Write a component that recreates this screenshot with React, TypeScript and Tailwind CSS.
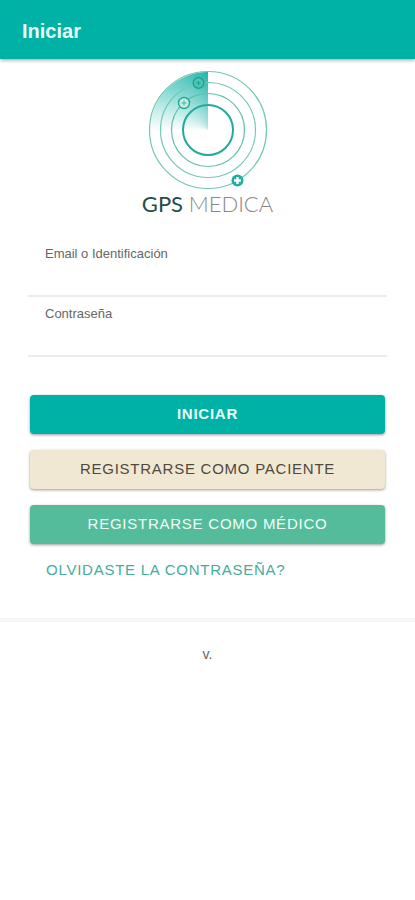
import React, { useState } from "react";

const Logo: React.FC = () => (
  <div className="flex flex-col items-center">
    <div className="relative w-[120px] h-[120px]">
      {/* Radar sweep */}
      <div className="absolute top-[2px] left-[2px] w-[58px] h-[58px] rounded-tl-full bg-[radial-gradient(circle_at_100%_100%,#ffffffaa_0%,#ffffff00_70%),conic-gradient(from_270deg_at_100%_100%,#00b1a505_0deg,#00b1a544_25deg,#00b1a588_50deg,#00a99ddd_90deg)]" />
      <svg className="absolute inset-0" width="120" height="120" viewBox="0 0 120 120" fill="none" aria-hidden="true">
        <circle cx="60" cy="60" r="58.5" stroke="#72c8b2" strokeWidth="1.2" />
        <circle cx="60" cy="60" r="47.5" stroke="#72c8b2" strokeWidth="1.2" />
        <circle cx="60" cy="60" r="36.5" stroke="#5fc0a8" strokeWidth="1.2" />
        <circle cx="60" cy="60" r="25" stroke="#22aa9b" strokeWidth="2" />
        <circle cx="50.5" cy="13" r="5.3" fill="#4fc4b4" stroke="#1b9f8f" strokeWidth="1.3" />
        <path d="M48.5 13h4M50.5 11v4" stroke="#1b9f8f" />
        <circle cx="36" cy="33" r="5.5" fill="#c5ece5" stroke="#1fa896" strokeWidth="1.4" />
        <path d="M33.5 33h5M36 30.5v5" stroke="#3fb5a0" />
        <circle cx="89.5" cy="110.5" r="6" fill="#1fae9f" />
        <path d="M86 110.5h7M89.5 107v7" stroke="#fff" strokeWidth="2.4" />
      </svg>
    </div>
    <h1 className="font-['Lato'] text-[22px] leading-7 whitespace-nowrap">
      <span className="text-[#1f4f49]">GPS</span>{" "}
      <span className="font-light text-[#888]">MEDICA</span>
    </h1>
  </div>
);

interface FieldProps {
  id: string;
  label: string;
  type: string;
  value: string;
  onChange: (value: string) => void;
}

const Field: React.FC<FieldProps> = ({ id, label, type, value, onChange }) => (
  <div className="flex flex-col h-[60px] px-[17px] pt-[9px] border-b-2 border-[#ececec]">
    <label htmlFor={id} className="text-[13px] leading-4 text-[#666]">{label}</label>
    <input
      id={id}
      type={type}
      value={value}
      onChange={(e) => onChange(e.target.value)}
      className="w-full flex-1 bg-transparent text-base outline-none"
    />
  </div>
);

const buttonClass = "w-full h-[39px] rounded-[4px] text-[15px] tracking-wider shadow-[0_1px_3px_rgba(0,0,0,0.4)]";

const App: React.FC = () => {
  const [email, setEmail] = useState("");
  const [password, setPassword] = useState("");

  return (
    <div className="min-h-screen bg-white font-['Liberation_Sans',sans-serif]">
      <header className="h-[59px] px-[22px] pt-[2px] flex items-center bg-[#00b1a5] shadow-[0_1px_4px_rgba(0,0,0,0.4)]">
        <p className="text-[20px] font-bold text-[#e8fbf8]">Iniciar</p>
      </header>

      <main>
        <form onSubmit={(e) => e.preventDefault()} className="px-7 pt-[11px] pb-9 border-b-4 border-[#f6f6f6]">
          <Logo />

          <div className="mt-[19px]">
            <Field id="email" label="Email o Identificación" type="text" value={email} onChange={setEmail} />
            <Field id="password" label="Contraseña" type="password" value={password} onChange={setPassword} />
          </div>

          <div className="mt-[38px] px-[2px] flex flex-col gap-4">
            <button type="submit" className={`${buttonClass} bg-[#00b1a5] text-[#eafffb] font-bold`}>INICIAR</button>
            <button type="button" className={`${buttonClass} bg-[#f1e8d3] text-[#50493f]`}>REGISTRARSE COMO PACIENTE</button>
            <button type="button" className={`${buttonClass} bg-[#55bc9b] text-[#f0fff9]`}>REGISTRARSE COMO MÉDICO</button>
          </div>

          <a href="#" className="inline-block mt-4 ml-[18px] text-[15px] leading-5 tracking-wider text-[#45ad9d]">
            OLVIDASTE LA CONTRASEÑA?
          </a>
        </form>

        <p className="mt-[22px] text-center text-sm text-[#666]">v.</p>
      </main>
    </div>
  );
};

export default App;
